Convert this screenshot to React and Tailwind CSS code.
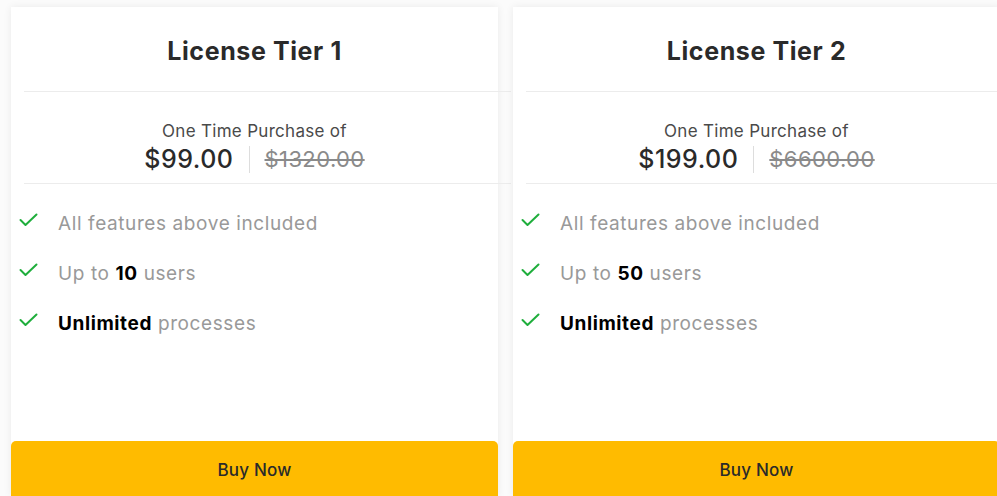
import React from "react";

const Check = () => (
  <svg width="19" height="14" viewBox="0 0 19 14" className="shrink-0">
    <path d="M1.5 7 L6.5 12 L17.5 1.5" fill="none" stroke="#1fae3c" strokeWidth="2" strokeLinecap="round" strokeLinejoin="round" />
  </svg>
);

const Feature = ({ children }) => (
  <div className="flex items-start h-[50px]">
    <div className="w-[47px] pl-[8px] pt-[2px] shrink-0">
      <Check />
    </div>
    <div className="text-[19px] text-[#999999] leading-[26px] tracking-[0.6px]">{children}</div>
  </div>
);

const Card = ({ title, price, old, users }) => (
  <div className="w-[487px] h-[490px] shrink-0 bg-white shadow-[0_0_8px_rgba(0,0,0,0.07)] flex flex-col">
    <div className="h-[84px] flex items-center justify-center pt-[5px]">
      <h2 className="text-[25px] font-bold text-[#2a2a2a] tracking-[0.6px]">{title}</h2>
    </div>
    <div className="ml-[13px] w-full h-px bg-[#ececec] shrink-0" />
    <div className="h-[91px] flex flex-col items-center pt-[29px]">
      <div className="text-[17px] text-[#4a4a4a] leading-[21px] tracking-[0.3px]">One Time Purchase of</div>
      <div className="flex items-center mt-[1px]">
        <span className="text-[25px] font-medium text-[#2a2a2a] leading-[33px] tracking-[0.5px]">{price}</span>
        <span className="mx-[15px] w-px h-[27px] bg-[#dddddd]" />
        <span className="text-[22px] text-[#8a8a8a] line-through leading-[33px] tracking-[0.4px]">{old}</span>
      </div>
    </div>
    <div className="ml-[13px] w-full h-px bg-[#ececec] shrink-0" />
    <div className="pt-[27px] flex flex-col">
      <Feature>All features above included</Feature>
      <Feature>
        Up to <span className="font-bold text-black">{users}</span> users
      </Feature>
      <Feature>
        <span className="font-bold text-black">Unlimited</span> processes
      </Feature>
    </div>
    <div className="mt-auto h-[56px] bg-[#ffbb00] rounded-t-[5px] flex items-center justify-center pt-[3px]">
      <span className="text-[17px] text-[#2a2a2a] font-medium tracking-[0.2px]">Buy Now</span>
    </div>
  </div>
);

export default function App() {
  return (
    <div
      className="w-[997px] h-[496px] overflow-hidden bg-[#fbfbfb] flex gap-[15px] pl-[11px] pt-[7px]"
      style={{ fontFamily: "Inter, 'Noto Sans', sans-serif" }}
    >
      <Card title="License Tier 1" price="$99.00" old="$1320.00" users="10" />
      <Card title="License Tier 2" price="$199.00" old="$6600.00" users="50" />
    </div>
  );
}
